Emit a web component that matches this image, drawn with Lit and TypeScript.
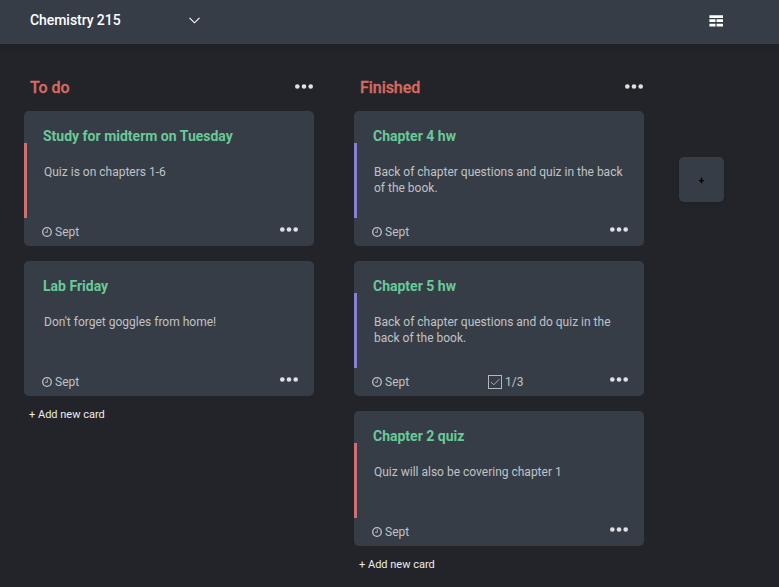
import { LitElement, html, svg, css, nothing } from "lit";
import { customElement, property } from "lit/decorators.js";
import { classMap } from "lit/directives/class-map.js";

interface Card {
  title: string;
  text: string;
  due: string;
  tag?: "red" | "violet";
  tasks?: string;
}

interface Column {
  name: string;
  cards: Card[];
}

const columns: Column[] = [
  {
    name: "To do",
    cards: [
      { title: "Study for midterm on Tuesday", text: "Quiz is on chapters 1-6", due: "Sept", tag: "red" },
      { title: "Lab Friday", text: "Don't forget goggles from home!", due: "Sept" },
    ],
  },
  {
    name: "Finished",
    cards: [
      { title: "Chapter 4 hw", text: "Back of chapter questions and quiz in the back of the book.", due: "Sept", tag: "violet" },
      { title: "Chapter 5 hw", text: "Back of chapter questions and do quiz in the back of the book.", due: "Sept", tag: "violet", tasks: "1/3" },
      { title: "Chapter 2 quiz", text: "Quiz will also be covering chapter 1", due: "Sept", tag: "red" },
    ],
  },
];

const dots = html`<svg class="dots" width="18" height="7" viewBox="0 0 18 7" fill="#dfe1e4">
  ${[2.3, 9, 15.7].map((x) => svg`<circle cx=${x} cy="3.5" r="2.3"></circle>`)}
</svg>`;

@customElement("board-card")
export class BoardCard extends LitElement {
  @property({ attribute: false }) card!: Card;

  static styles = css`
    :host { display: block; }
    .card {
      position: relative;
      box-sizing: border-box;
      height: 135px;
      padding: 17px 16px 6px 18px;
      border-radius: 5px;
      background: #373d47;
      display: flex;
      flex-direction: column;
    }
    .tag { position: absolute; left: 0; top: 32px; width: 3px; height: 75px; }
    .red { background: #cf6f74; }
    .violet { background: #8781d6; }
    .title { margin: 0 0 0 1px; font-size: 14px; line-height: 16px; font-weight: 700; color: #68ca98; }
    .text { margin: 20px 0 0 2px; font-size: 12px; line-height: 16px; color: #c0c2c5; }
    .foot {
      margin-top: auto;
      display: grid;
      grid-template-columns: 116px 1fr auto;
      height: 16px;
      align-items: center;
      font-size: 12px;
      line-height: 16px;
      color: #c0c2c5;
    }
    .item { display: flex; align-items: center; gap: 3px; }
    .dots { display: block; margin-top: -5px; }
  `;

  render() {
    const c = this.card;
    return html`<article class="card">
      ${c.tag ? html`<span class=${classMap({ tag: true, [c.tag]: true })}></span>` : nothing}
      <h3 class="title">${c.title}</h3>
      <p class="text">${c.text}</p>
      <div class="foot">
        <span class="item">
          <svg width="10" height="10" viewBox="0 0 10 10" fill="none" stroke="#c0c2c5">
            <circle cx="5" cy="5" r="4.3" stroke-width="1.3"></circle>
            <path d="M5.3 2.3V5.3H3.2" stroke-width="0.9"></path>
          </svg>
          ${c.due}
        </span>
        <span class="item">
          ${c.tasks
            ? html`<svg width="14" height="14" viewBox="0 0 14 14" fill="none" stroke="#b4b7bc">
                  <rect x=".5" y=".5" width="13" height="13"></rect>
                  <path d="M3 7L5.8 9.8L11.3 4.2" stroke-width="0.9"></path>
                </svg>
                ${c.tasks}`
            : nothing}
        </span>
        ${dots}
      </div>
    </article>`;
  }
}

@customElement("app-root")
export class AppRoot extends LitElement {
  static styles = css`
    :host {
      display: block;
      height: 587px;
      overflow: hidden;
      background: #232429;
      font-family: Roboto, sans-serif;
    }
    .bar {
      box-sizing: border-box;
      height: 44px;
      padding: 0 56px 4px 30px;
      display: flex;
      align-items: center;
      background: #373d47;
      color: #fff;
      box-shadow: 0 8px 2px -1px #1f2327;
    }
    .course { width: 159px; font-size: 14px; line-height: 18px; font-weight: 500; letter-spacing: -0.06px; }
    .grid { margin: 1px 0 0 auto; }
    .board { display: flex; align-items: flex-start; gap: 40px; padding: 34px 24px 0; }
    .column { width: 290px; flex: none; }
    .head { display: flex; justify-content: space-between; height: 33px; padding: 0 1px 0 6px; }
    .name {
      margin: 0;
      font-size: 16px;
      line-height: 19px;
      font-weight: 500;
      letter-spacing: -0.05px;
      color: #d86a61;
      -webkit-text-stroke: 0.3px #d86a61;
    }
    .head .dots { margin-top: 5px; }
    .cards { display: flex; flex-direction: column; gap: 15px; }
    .add { margin: 11px 0 0 5px; font-size: 11px; line-height: 16px; color: #eceded; }
    .tile {
      box-sizing: border-box;
      width: 45px;
      height: 45px;
      margin: 79px 0 0 -5px;
      padding-top: 1px;
      border-radius: 5px;
      background: #373d47;
      color: #000;
      display: flex;
      align-items: center;
      justify-content: center;
      font-size: 10px;
      font-weight: 700;
      box-shadow: 0 1px 3px #1f2124;
    }
  `;

  render() {
    return html`
      <header class="bar">
        <span class="course">Chemistry 215</span>
        <svg width="11" height="7" viewBox="0 0 11 7" fill="none" stroke="#fff" stroke-width="1.1">
          <path d="M.5 .8L5.5 5.8L10.5 .8"></path>
        </svg>
        <svg class="grid" width="14" height="12" viewBox="0 0 14 12" fill="#fff">
          <path d="M.4 .2H14V3H.4ZM.4 4.3H6.5V7H.4ZM7.6 4.3H14V7H7.6ZM.4 8.8H6.5V11.5H.4ZM7.6 8.8H14V11.5H7.6Z"></path>
        </svg>
      </header>
      <main class="board">
        ${columns.map(
          (col) => html`<section class="column">
            <div class="head"><h2 class="name">${col.name}</h2>${dots}</div>
            <div class="cards">${col.cards.map((c) => html`<board-card .card=${c}></board-card>`)}</div>
            <div class="add">+ Add new card</div>
          </section>`
        )}
        <div class="tile">+</div>
      </main>
    `;
  }
}
